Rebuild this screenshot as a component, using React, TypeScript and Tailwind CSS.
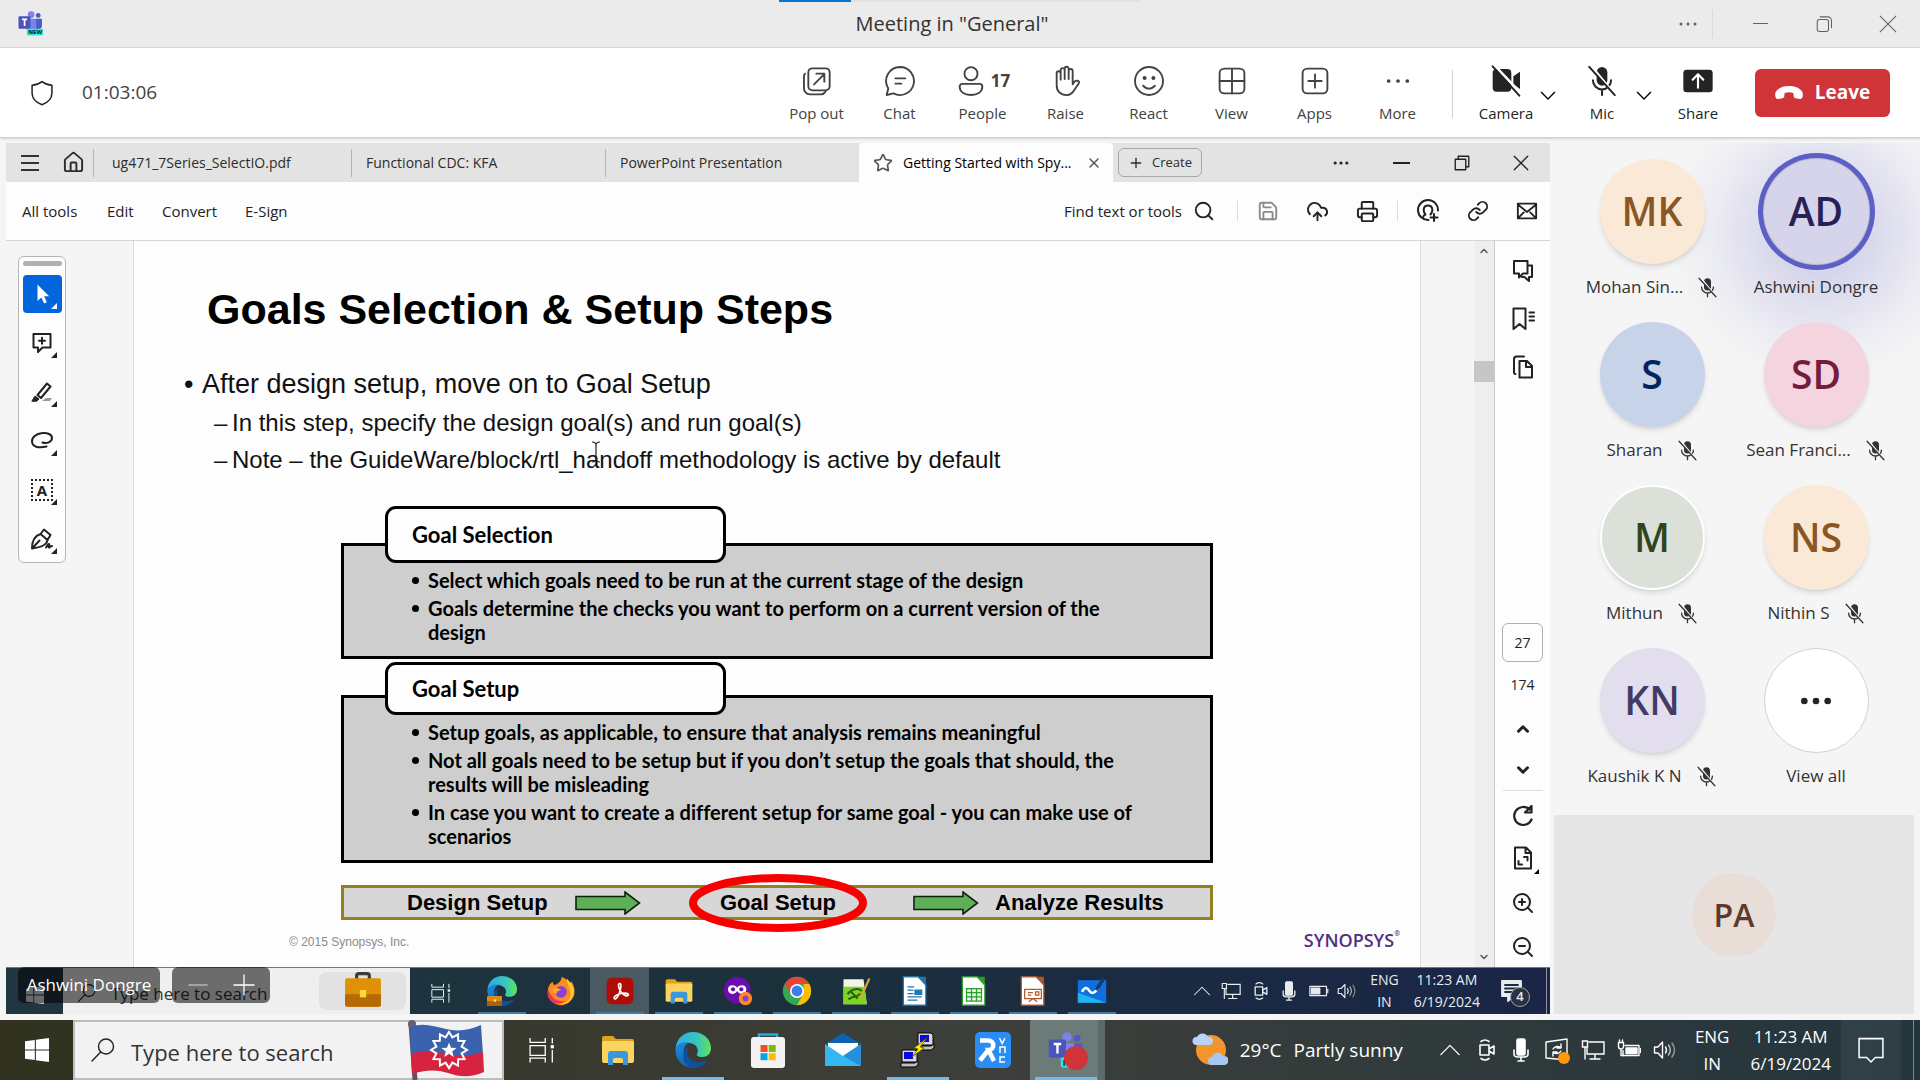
import React from "react";
import { LuHouse, LuStar, LuX, LuPlus, LuSearch, LuSave, LuCloudUpload, LuPrinter, LuLink, LuZoomIn, LuZoomOut, LuChevronUp, LuChevronDown } from "react-icons/lu";

type Kids = { children?: React.ReactNode; className?: string };

function Line({ children, className = "size-[32px]", w = 1.4 }: Kids & { w?: number }) {
  return (
    <svg viewBox="0 0 24 24" className={className} fill="none" stroke="currentColor" strokeWidth={w} strokeLinecap="round" strokeLinejoin="round" aria-hidden="true">
      {children}
    </svg>
  );
}

function Art({ children, className = "size-9" }: Kids) {
  return (
    <svg viewBox="0 0 36 36" className={className} aria-hidden="true">
      {children}
    </svg>
  );
}

function Dots({ className = "size-[32px]", r = 1.3 }: { className?: string; r?: number }) {
  return (
    <svg viewBox="0 0 24 24" className={className} fill="currentColor" aria-hidden="true">
      <circle cx="5" cy="12" r={r} />
      <circle cx="12" cy="12" r={r} />
      <circle cx="19" cy="12" r={r} />
    </svg>
  );
}

function MicOff({ className }: { className: string }) {
  return (
    <svg viewBox="0 0 24 24" className={className} fill="none" stroke="currentColor" strokeWidth="1.5" strokeLinecap="round" aria-hidden="true">
      <rect x="8" y="1.5" width="8" height="14" rx="4" fill="currentColor" stroke="none" />
      <path d="M5.2 11.5a6.8 6.8 0 0 0 13.6 0M12 18.5v4" />
      <path d="M3.6 .4l18 22" stroke="white" strokeWidth="2" />
      <path d="M2.4 1.4l19.2 21.2" />
    </svg>
  );
}

function TeamsLogo({ className }: { className: string }) {
  return (
    <svg viewBox="0 0 24 24" className={className} aria-hidden="true">
      <circle cx="12.6" cy="3.4" r="3.2" fill="#7b83eb" />
      <circle cx="19.4" cy="4.2" r="2.3" fill="#5059c9" />
      <path d="M17 7.5h6v7a4 4 0 0 1-6 3z" fill="#5059c9" />
      <path d="M8 7.5h9.5v8a5 5 0 0 1-9.5 2z" fill="#7b83eb" />
      <rect x="0.5" y="5" width="11.5" height="12" rx="1" fill="#4b53bc" />
      <path d="M3.8 8h5M6.3 8v6.3" stroke="white" strokeWidth="1.6" fill="none" />
      <rect x="8.5" y="17" width="15.5" height="6.6" rx="1.2" fill="#2fe6e0" />
      <text x="9.8" y="22.4" fontSize="5.6" fontWeight="800" fontFamily="Open Sans, sans-serif" fill="#083b3a">NEW</text>
    </svg>
  );
}

function ToolItem({ label, children }: { label: string; children: React.ReactNode }) {
  return (
    <button className="flex w-[83px] flex-col items-center gap-[6px] text-[#424242]">
      <span className="flex h-8 items-center gap-1">{children}</span>
      <span className="text-[15px] leading-5">{label}</span>
    </button>
  );
}

function SolidItem({ label, children }: { label: string; children: React.ReactNode }) {
  return (
    <button className="flex w-[60px] flex-col items-center gap-[6px] text-[#242424]">
      <span className="flex h-8 items-center">{children}</span>
      <span className="text-[15px] leading-5">{label}</span>
    </button>
  );
}

function TitleBar() {
  return (
    <header className="relative grid h-12 grid-cols-[1fr_auto_1fr] items-center border-b border-[#d6d6d6] bg-[#ebebeb]">
      <div className="absolute top-0 left-[779px] flex h-[2px] w-[361px] bg-[#e2e2e2]">
        <div className="w-[72px] bg-[#0078d4]" />
      </div>
      <TeamsLogo className="ml-[18px] size-[25px]" />
      <h1 className="pr-4 text-[20px] text-[#333]">Meeting in "General"</h1>
      <div className="flex items-center justify-end text-[#616161]">
        <button aria-label="More options" className="mr-3"><Dots className="size-6" r={1.5} /></button>
        <span className="mr-[15px] h-7 w-px bg-[#dcdcdc]" />
        <button aria-label="Minimize" className="flex w-16 justify-center"><span className="block h-px w-[15px] bg-[#616161]" /></button>
        <button aria-label="Restore" className="flex w-16 justify-center">
          <Line className="size-[18px]"><rect x="3" y="6" width="15" height="16" rx="3" /><path d="M7 2.5h10a5 5 0 0 1 5 5V17" /></Line>
        </button>
        <button aria-label="Close" className="flex w-16 justify-center">
          <Line className="size-[18px]"><path d="M1.5 1.5l21 21M22.500 1.500l-21 21" /></Line>
        </button>
      </div>
    </header>
  );
}

function MeetingBar() {
  return (
    <div className="flex h-[90px] items-center border-b border-[#d1d1d1] bg-white shadow-sm">
      <Line className="ml-7 size-7 text-[#242424]" w={1.3}><path d="M12 2.200c2.600 2 5.300 2.900 8.500 3.100V12c0 4.800-3 8-8.500 10-5.500-2-8.500-5.200-8.500-10V5.300c3.200-.2 5.900-1.100 8.500-3.100z" /></Line>
      <time className="ml-[26px] text-[19px] text-[#424242]">01:03:06</time>
      <div className="ml-auto flex items-center pr-[30px] pt-[2px]">
        <ToolItem label="Pop out">
          <Line><rect x="5.500" y="2.500" width="16" height="16.500" rx="3" /><path d="M3 6.500A4 4 0 0 0 2.200 9v8.500A4.500 4.500 0 0 0 6.700 22H15a4 4 0 0 0 3.300-2M9.800 14.600l7.600-7.800M11.500 6.500h6v6" /></Line>
        </ToolItem>
        <ToolItem label="Chat">
          <Line><path d="M12 1.500a10.500 10.500 0 1 1-4.900 19.800L2 22.500l1.200-4.900A10.500 10.500 0 0 1 12 1.500zM8.500 10h7.500M8.500 14h4.500" /></Line>
        </ToolItem>
        <ToolItem label="People">
          <Line><circle cx="12" cy="6.500" r="4.900" /><path d="M5.500 14.200h13a2 2 0 0 1 2 2c0 4-3.500 6.300-8.500 6.300s-8.500-2.300-8.500-6.300a2 2 0 0 1 2-2z" /></Line>
          <span className="text-[17px] font-bold">17</span>
        </ToolItem>
        <ToolItem label="Raise">
          <Line><path d="M5 13V6.200a1.500 1.500 0 0 1 3 0V11V3.800a1.500 1.500 0 0 1 3 0V10.500V2.800a1.500 1.500 0 0 1 3 0V10.500V4.500a1.500 1.500 0 0 1 3 0V14.500c.8-1.600 2-3 3.700-2.700 1.200.3 1.500 1.300.7 2.200l-2.800 4.200c-1.500 2.600-3 4.400-6.100 4.400-4.700 0-7.500-3-7.500-7.500z" /></Line>
        </ToolItem>
        <ToolItem label="React">
          <Line><circle cx="12" cy="12" r="10.500" /><path d="M7.600 15.500c2.400 3 6.400 3 8.800 0" /><circle cx="8.700" cy="9.800" r=".8" fill="currentColor" /><circle cx="15.300" cy="9.800" r=".8" fill="currentColor" /></Line>
        </ToolItem>
        <ToolItem label="View">
          <Line><rect x="2.700" y="2.700" width="18.600" height="18.600" rx="3.500" /><path d="M12 2.700v18.600M2.700 12h18.600" /></Line>
        </ToolItem>
        <ToolItem label="Apps">
          <Line><rect x="2.700" y="2.700" width="18.600" height="18.600" rx="3.500" /><path d="M12 7v10M7 12h10" /></Line>
        </ToolItem>
        <ToolItem label="More"><Dots r={1.4} /></ToolItem>
        <span className="mr-[23px] ml-[13px] h-12 w-px bg-[#d1d1d1]" />
        <SolidItem label="Camera">
          <Line className="size-8" w={1.5}>
            <path d="M2 6a3 3 0 0 1 3-3h8a3 3 0 0 1 3 3v11a3 3 0 0 1-3 3H5a3 3 0 0 1-3-3z M17.500 8.500l5-3.500v13l-5-3.500z" fill="currentColor" stroke="none" />
            <path d="M3.500.5l20 21" stroke="white" strokeWidth="2" /><path d="M2 1l20 22" />
          </Line>
        </SolidItem>
        <button aria-label="Camera options" className="flex w-6 justify-center pt-1"><Line className="size-4" w={2}><path d="M2 6.500l10 10 10-10" /></Line></button>
        <span className="w-3" />
        <SolidItem label="Mic"><MicOff className="size-8" /></SolidItem>
        <button aria-label="Mic options" className="flex w-6 justify-center pt-1"><Line className="size-4" w={2}><path d="M2 6.500l10 10 10-10" /></Line></button>
        <span className="w-3" />
        <SolidItem label="Share">
          <Line className="size-8" w={1.600}><rect x="1" y="3.500" width="22" height="17" rx="2.500" fill="currentColor" stroke="none" /><path d="M12 17V7.500M8 11l4-4 4 4" stroke="white" /></Line>
        </SolidItem>
        <button className="mb-[2px] ml-[27px] flex h-12 w-[135px] items-center justify-center gap-3 rounded-md bg-[#d13438] text-white">
          <svg viewBox="0 0 28 14" className="h-[14px] w-7" fill="currentColor" aria-hidden="true"><path d="M14 0c6 0 10 1.800 12.700 5 1.300 1.500 1.500 4 .6 6.500-.4 1-1.300 1.700-2.500 1.500l-4.300-.8c-1-.2-1.700-1-1.800-2L18.400 7C15.500 5.900 12.500 5.900 9.600 7l-.3 3.200c-.1 1-.8 1.800-1.800 2l-4.300.8c-1.200.2-2.100-.5-2.500-1.500C-.2 9 0 6.500 1.300 5 4 1.800 8 0 14 0z" /></svg>
          <span className="text-[19px] font-bold">Leave</span>
        </button>
      </div>
    </div>
  );
}

function PdfTabs() {
  return (
    <div className="flex h-[39px] items-center bg-[#e3e3e3] text-[14px] text-[#2c2c2c]">
      <button aria-label="Menu" className="ml-[15px] flex w-[18px] flex-col gap-[5px]">
        <span className="h-[2px] bg-[#333]" /><span className="h-[2px] bg-[#333]" /><span className="h-[2px] bg-[#333]" />
      </button>
      <button aria-label="Home" className="mr-[8px] ml-[23px]"><LuHouse className="size-[23px]" /></button>
      <button className="h-7 w-[258px] border-l border-[#b4b4b4] pl-[18px] text-left">ug471_7Series_SelectIO.pdf</button>
      <button className="h-7 w-[254px] border-l border-[#b4b4b4] pl-[14px] text-left">Functional CDC: KFA</button>
      <button className="h-7 w-[254px] border-l border-[#b4b4b4] pl-[14px] text-left">PowerPoint Presentation</button>
      <div className="flex h-full w-[254px] items-center rounded-t bg-[#fdfdfd] pl-[14px] text-black">
        <LuStar className="size-[20px] text-[#555]" />
        <button className="ml-[10px] w-[172px] truncate text-left">Getting Started with Spy...</button>
        <button aria-label="Close tab" className="ml-[11px]"><LuX className="size-4 text-[#555]" /></button>
      </div>
      <button className="ml-[5px] flex h-[29px] w-[84px] items-center justify-center gap-2 rounded-md border border-[#a8a8a8] text-[13px]">
        <LuPlus className="size-[16px]" />Create
      </button>
      <div className="ml-auto flex items-center text-[#222]">
        <button aria-label="More" className="flex w-[61px] justify-center"><Dots className="size-5" r={1.900} /></button>
        <button aria-label="Minimize window" className="flex w-[61px] justify-center"><span className="h-[2px] w-[17px] bg-[#222]" /></button>
        <button aria-label="Restore window" className="flex w-[59px] justify-center"><Line className="size-[18px]" w={1.800}><path d="M3 7h14v14H3zM7 7V3h14v14h-4" /></Line></button>
        <button aria-label="Close window" className="flex w-[59px] justify-center"><Line className="size-[18px]" w={1.800}><path d="M3 3l18 18M21 3L3 21" /></Line></button>
      </div>
    </div>
  );
}

function PdfToolbar() {
  return (
    <div className="flex h-[59px] items-center border-b border-[#d5d5d5] bg-[#fdfdfd] pl-4 text-[15px] text-[#222]">
      <button className="w-[85px] text-left">All tools</button>
      <button className="w-[55px] text-left">Edit</button>
      <button className="w-[83px] text-left">Convert</button>
      <button>E-Sign</button>
      <button className="ml-auto flex items-center gap-[11px]">Find text or tools <LuSearch className="size-[22px]" /></button>
      <span className="mx-[22px] h-5 w-px bg-[#ddd]" />
      <button aria-label="Save" className="mr-[27px] ml-[-3px] text-[#8a8a8a]"><LuSave className="size-[22px]" /></button>
      <button aria-label="Upload" className="mr-[27px]"><LuCloudUpload className="size-[23px]" /></button>
      <button aria-label="Print"><LuPrinter className="size-[23px]" /></button>
      <span className="mx-[18px] h-5 w-px bg-[#ddd]" />
      <button aria-label="Request signatures" className="mr-[27px]">
        <Line className="size-6" w={2}><path d="M12.500 21A10 10 0 1 1 22 11.500M7 18.500c.3-2 1-2.500 2.500-3-2.500-2.500-3-9 2.500-9s5 6.500 2.500 9M18 15v7M14.500 18.500h7" /></Line>
      </button>
      <button aria-label="Copy link" className="mr-[27px]"><LuLink className="size-[22px]" /></button>
      <button aria-label="Email" className="mr-3">
        <Line className="size-[22px]" w={2}><path d="M2 4h20v16H2zM2 5l10 8 10-8M2.500 19.500l6-6M21.500 19.500l-6-6" /></Line>
      </button>
    </div>
  );
}

function PaletteButton({ label, active, children }: { label: string; active?: boolean; children: React.ReactNode }) {
  return (
    <button aria-label={label} className={active ? "relative flex h-[38px] w-[39px] items-center justify-center rounded bg-[#0265dc] text-white" : "relative flex h-[38px] w-[39px] items-center justify-center text-[#222]"}>
      {children}
      <svg viewBox="0 0 6 6" className="absolute right-[5px] bottom-[4px] size-[6px]" fill="currentColor" aria-hidden="true"><path d="M6 0v6H0z" /></svg>
    </button>
  );
}

function Palette() {
  return (
    <aside className="w-[128px] shrink-0 border-r border-[#dadada] bg-[#f5f5f5] pt-[15px] pl-3">
      <div className="flex w-12 flex-col items-center gap-[11px] rounded-md border border-[#b5b5b5] bg-[#fdfdfd] pt-1 pb-1">
        <span className="mb-[-2px] h-[5px] w-[39px] rounded-full bg-[#b0b0b0]" />
        <PaletteButton label="Select" active>
          <Line className="size-6" w={0}><path d="M7.500 2.500v16.500l3.800-3.600 2.800 6 2.800-1.200-2.800-6h5z" fill="white" /></Line>
        </PaletteButton>
        <PaletteButton label="Add comment"><Line className="size-6" w={2}><path d="M3.500 3h17v13.500h-8L8 21v-4.500H3.500zM12 6.800v6M9 9.800h6" /></Line></PaletteButton>
        <PaletteButton label="Highlight"><Line className="size-6" w={2}><path d="M7.500 15L17 3.500l3.500 3L11 18z" /><path d="M2 21l3-5 4 3-2 2z" fill="currentColor" strokeWidth="1" /><path d="M12 21h8l2-3h-6z" fill="#9a9a9a" stroke="none" /></Line></PaletteButton>
        <PaletteButton label="Draw"><Line className="size-6" w={2}><path d="M12.500 13.500c4 1.500 9.500-.5 9.500-4.500 0-3.500-4.500-5.500-9.500-5C6 4.600 1.500 8.500 2 13c.5 4.500 6 6.500 14.500 4.500" /></Line></PaletteButton>
        <PaletteButton label="Text box"><span className="flex size-[22px] items-center justify-center border-2 border-dotted border-[#222] text-[15px] leading-none font-bold">A</span></PaletteButton>
        <PaletteButton label="Sign"><Line className="size-6" w={2}><path d="M2 21.500c0-6 2-12.500 8.500-14.500l7 6c-.5 4.500-7 7.500-15.500 8.500zM2.500 21l7-7.500M10.500 7L14 2.500l6.500 5.500-3 5M16 20.500c1.500-2 2-4 3-3.500s-1 3.500 0 3.500 1-1.500 3-1.500" /></Line></PaletteButton>
      </div>
    </aside>
  );
}

function Bullet({ children }: { children: React.ReactNode }) {
  return (
    <li className="flex">
      <span className="flex h-6 w-4 shrink-0 items-center"><span className="size-[7px] rounded-full bg-black" /></span>
      <span>{children}</span>
    </li>
  );
}

function GoalBox({ title, compact, children }: { title: string; compact?: boolean; children: React.ReactNode }) {
  return (
    <section className="w-[872px] font-[Lato,sans-serif] font-bold text-black [font-variant-ligatures:none]">
      <h3 className={`relative z-10 ml-[44px] flex w-[341px] items-center rounded-[11px] border-[3px] border-black bg-[#fefefe] pl-6 text-[22px] ${compact ? "h-[53px]" : "h-[57px]"}`}>{title}</h3>
      <ul className="mt-[-20px] flex flex-col gap-1 border-[3px] border-black bg-[#cecece] pt-[22px] pr-[40px] pb-3 pl-[68px] text-[20px] leading-6">{children}</ul>
    </section>
  );
}

function Arrow() {
  return (
    <svg viewBox="0 0 66 24" className="h-6 w-[66px]" aria-hidden="true"><path d="M1 5.500h49V1l14.500 11L50 23v-4.500H1z" fill="#5faf58" stroke="#0d240c" strokeWidth="1.600" /></svg>
  );
}

function Slide() {
  return (
    <article className="flex min-w-0 flex-1 flex-col bg-[#fdfdfd] font-['Liberation_Sans',Arial,sans-serif] text-[#111]">
      <h2 className="mt-[43px] ml-[73px] text-[43px] leading-[50px] font-bold text-black">Goals Selection &amp; Setup Steps</h2>
      <p className="mt-[34px] flex pl-[50px] text-[27px] leading-8"><span className="w-[18px]">•</span>After design setup, move on to Goal Setup</p>
      <p className="mt-1 flex pl-[80px] text-[24px] leading-[37px]"><span className="w-[18px]">–</span>In this step, specify the design goal(s) and run goal(s)</p>
      <p className="relative flex pl-[80px] text-[24px] leading-[37px]">
        <span className="w-[18px]">–</span>Note – the GuideWare/block/rtl_handoff methodology is active by default
        <svg viewBox="0 0 10 22" className="absolute top-0 left-[457px] h-[22px] w-[10px]" stroke="#222" strokeWidth="1.200" fill="none" aria-hidden="true"><path d="M1 1q4 0 4 3v14q0 3-4 3M9 1Q5 1 5 4v14q0 3 4 3" /></svg>
      </p>
      <div className="mt-7 ml-[207px] flex flex-col gap-[3px]">
        <GoalBox title="Goal Selection">
          <Bullet>Select which goals need to be run at the current stage of the design</Bullet>
          <Bullet>Goals determine the checks you want to perform on a current version of the<br />design</Bullet>
        </GoalBox>
        <GoalBox title="Goal Setup" compact>
          <Bullet>Setup goals, as applicable, to ensure that analysis remains meaningful</Bullet>
          <Bullet>Not all goals need to be setup but if you don’t setup the goals that should, the<br />results will be misleading</Bullet>
          <Bullet>In case you want to create a different setup for same goal - you can make use of<br />scenarios</Bullet>
        </GoalBox>
      </div>
      <div className="mt-[22px] ml-[207px] flex h-[35px] w-[872px] items-center border-[3px] border-[#93801f] bg-[#d7d7d7] pl-[63px] text-[22px] font-bold text-black">
        <span className="w-[168px]">Design Setup</span>
        <Arrow />
        <span className="relative ml-12 flex h-7 w-[178px] items-center justify-center">
          Goal Setup
          <svg viewBox="0 0 178 58" className="absolute top-[-15px] left-0 h-[58px] w-[178px]" fill="none" stroke="#f80000" strokeWidth="8" aria-hidden="true"><ellipse cx="89" cy="29" rx="85" ry="25" /></svg>
        </span>
        <span className="ml-[46px] flex"><Arrow /></span>
        <span className="ml-[16px]">Analyze Results</span>
      </div>
      <div className="mt-auto mb-[9px] flex items-center justify-between pr-[20px] pl-[155px]">
        <span className="text-[12px] text-[#8a8a8a]">© 2015 Synopsys, Inc.</span>
        <span className="flex items-start pb-1 font-['Open_Sans',sans-serif] text-[18px] leading-7 font-semibold text-[#50307f]">SYNOPSYS<span className="text-[7px] leading-4">®</span></span>
      </div>
    </article>
  );
}

function RightRail() {
  return (
    <aside className="flex w-[56px] shrink-0 flex-col items-center border-l border-[#c9c9c9] bg-[#fdfdfd] text-[#222]">
      <button aria-label="Comments" className="mt-[18px]"><Line className="size-6" w={2}><path d="M3 2h13.500v12.500H12L8 18.500v-4H3zM16.500 6.500H21V18h-3v4l-4.500-4H11" /></Line></button>
      <button aria-label="Bookmarks" className="mt-6"><Line className="size-6" w={2}><path d="M2.500 1.500h12V22l-6-5-6 5zM18.500 5.500H23M18.500 9.500H23M18.500 13.500H23" /></Line></button>
      <button aria-label="Pages" className="mt-6"><Line className="size-6" w={2}><path d="M8.500 6h7.500l5 5v11.500H8.500zM15 6v6h6M4.500 19C3 19 3 18.500 3 17V4c0-2 .5-2.500 2.500-2.500H13" /></Line></button>
      <input aria-label="Page" defaultValue="27" className="mt-auto block h-[39px] w-[41px] rounded-md border border-[#b0b0b0] bg-transparent text-center text-[14px]" />
      <span className="mt-[13px] text-[14px] leading-5">174</span>
      <button aria-label="Previous page" className="mt-[25px]"><LuChevronUp className="size-[18px]" strokeWidth={4} /></button>
      <button aria-label="Next page" className="mt-[23px]"><LuChevronDown className="size-[18px]" strokeWidth={4} /></button>
      <span className="mt-[11px] h-px w-[40px] bg-[#ddd]" />
      <button aria-label="Rotate" className="mt-[13px]"><Line className="size-6" w={2.200}><path d="M20.500 15.500A9 9 0 1 1 18.500 5.500M20.500 2v6.500H14z" /></Line></button>
      <button aria-label="Fit page" className="relative mt-[18px]">
        <Line className="size-6" w={2}><path d="M4 1.500h11l5 5v16H4zM14.500 1.500V7H20M13 11h3.500v3.500M11 18.500H7.500V15" /></Line>
        <svg viewBox="0 0 6 6" className="absolute right-[-4px] bottom-[-4px] size-[5px]" aria-hidden="true"><path d="M6 0v6H0z" /></svg>
      </button>
      <button aria-label="Zoom in" className="mt-[21px]"><LuZoomIn className="size-6" /></button>
      <button aria-label="Zoom out" className="mt-[20px] mb-[8px]"><LuZoomOut className="size-6" /></button>
    </aside>
  );
}

function Windows({ className }: { className: string }) {
  return (
    <svg viewBox="0 0 24 24" className={className} fill="currentColor" aria-hidden="true"><path d="M0 3.300l9.800-1.400v9.500H0zM10.900 1.700L24 0v11.400H10.900zM0 12.500h9.800V22L0 20.700zM10.900 12.500H24V24l-13.100-1.800z" /></svg>
  );
}

function TaskView({ className }: { className: string }) {
  return (
    <Line className={className} w={1.200}><path d="M1 1v4h14V1M1 8h14v9H1zM1 23.500v-4h14v4M21.500 1v5M21.500 12v11.500" strokeLinecap="butt" strokeLinejoin="miter" /><path d="M20 7.500h3v3h-3z" fill="currentColor" stroke="none" /></Line>
  );
}

const EdgeArt = () => (
  <>
    <defs>
      <linearGradient id="edgeTop" x1="0" x2="1"><stop offset="0" stopColor="#35a8e8" /><stop offset=".6" stopColor="#36c6c0" /><stop offset="1" stopColor="#5fe35a" /></linearGradient>
      <linearGradient id="edgeLow" x1="0" x2="1" y2="1"><stop offset="0" stopColor="#1d8fe0" /><stop offset="1" stopColor="#0c4a96" /></linearGradient>
    </defs>
    <path d="M.5 16C2 6 9 0 18 0c10 0 18 7 18 16 0 6-4 9-9 9-4 0-6-1.500-5-3 2-2.500 1-10-7-11C9 10.500 3 13 .5 16z" fill="url(#edgeTop)" />
    <path d="M.5 16C3 11 9 9.500 14 10.500c-4 2-6 6-5 11C10.500 29 17 33 24 32c3-.5 6-2 8.500-4C29 33 24 36 18 36 8 36-.5 27 .5 16z" fill="url(#edgeLow)" />
    <path d="M14 14.500c-3 3-2.500 9 1 12.500 4.500 4.300 12 4 17.500 1C29 34 23 36 18 36 11 34.500 7 28 8.500 21.500c.5-3 2.500-6 5.500-7z" fill="#114f9f" />
  </>
);

const FolderArt = () => (
  <>
    <path d="M2 6a2 2 0 0 1 2-2h9l3 3h16a2 2 0 0 1 2 2v4H2z" fill="#e0a21b" />
    <rect x="2" y="9" width="32" height="22" rx="2" fill="#fbd45f" />
    <path d="M8 33V22a3 3 0 0 1 3-3h14a3 3 0 0 1 3 3v11h-5v-5a2 2 0 0 0-2-2h-6a2 2 0 0 0-2 2v5z" fill="#3a97dd" />
  </>
);

const BriefcaseArt = () => (
  <>
    <path d="M12 7V3.500a2 2 0 0 1 2-2h8a2 2 0 0 1 2 2V7" fill="none" stroke="#3a3a3a" strokeWidth="3" />
    <rect x="1" y="6" width="34" height="27" rx="2" fill="#e19105" />
    <path d="M1 21h34v10a2 2 0 0 1-2 2H3a2 2 0 0 1-2-2z" fill="#b56a06" />
    <rect x="15" y="17" width="6" height="7" fill="#ffd83b" />
  </>
);

const FirefoxArt = () => (
  <>
    <path d="M19 1c5 2 8 5 9 8 2-1 2-3 2-3 4 5 5 11 4 16-2 8-9 13-16 13S2 29 2 20C2 13 5 9 8 7c0 2 1 3 2 4 3-1 8-3 9-10z" fill="#ff8a1f" />
    <path d="M25 3c5 5 10 12 8 19-2 8-9 13-16 12 10-2 14-9 12-16-1-6-4-9-4-15z" fill="#ffcb2f" />
    <path d="M3 16c3 11 11 16 20 14-7 6-19 3-21-7z" fill="#f0325c" />
    <circle cx="18" cy="19" r="7" fill="#8a3fd6" />
    <path d="M8 16c4-3 8-1 10 1-3 0-5 1-5 4-3 0-5-2-5-5z" fill="#ffae2b" />
  </>
);

function DocArt({ color, kind }: { color: string; kind: "text" | "grid" | "slide" }) {
  return (
    <>
      <path d="M4 1h18l9 9v25H4z" fill="white" stroke={color} strokeWidth="1.500" />
      <path d="M21 1h10v11z" fill={color} />
      {kind === "text" && <path d="M9 13h8M9 17h7M9 21h7M9 25h17M9 29h12M18 17h8v5h-8z" stroke={color} strokeWidth="1.500" fill={color} />}
      {kind === "grid" && <path d="M9 15h18v15H9zM9 20h18M9 25h18M15 15v15M21 15v15" stroke={color} strokeWidth="1.500" fill="#e6f5e6" />}
      {kind === "slide" && <path d="M8 16h20v11H8zM12 20h6M12 23h4M21 19h4v4h-4zM13 31l5-4 5 4" stroke={color} strokeWidth="1.500" fill="none" />}
    </>
  );
}

function SharedApp({ label, active, plain, children }: { label: string; active?: boolean; plain?: boolean; children: React.ReactNode }) {
  return (
    <button aria-label={label} className={active ? "flex h-full w-[59px] flex-col items-center justify-end bg-[#4a5a62]" : "flex h-full w-[59px] flex-col items-center justify-end"}>
      <Art className="mb-[6px] size-[30px]">{children}</Art>
      <span className={plain ? "h-[2px] w-[48px]" : "h-[2px] w-[48px] bg-[#3f7ba8]"} />
    </button>
  );
}

function CamTray({ className }: { className: string }) {
  return <Line className={className} w={1.600}><path d="M5 7h9v10H5zM14 11l5-3v8l-5-3M6 3.500Q10 .5 14 3.500M6 20.500q4 3 8 0" /></Line>;
}
function MicTray({ className }: { className: string }) {
  return <Line className={className} w={1.600}><rect x="8" y="1" width="8" height="16" rx="1.500" fill="currentColor" /><path d="M5 12v4q0 3 4 3h6q4 0 4-3v-4M12 19v4M9 23h6" /></Line>;
}
function NetTray({ className }: { className: string }) {
  return <Line className={className} w={1.400}><path d="M8 4h15v12H6V9M14 16v5M9 21h10M1.500 3h5v6h-5zM4 9v12" strokeLinejoin="miter" /></Line>;
}
function VolTray({ className }: { className: string }) {
  return <Line className={className} w={1.400}><path d="M1.500 9v6h3.500l4.500 5V4L5 9zM12.500 9q2 3 0 6" /><path d="M15.500 7q3.500 5 0 10" opacity=".7" /><path d="M19 5q5 7 0 14" opacity=".5" /></Line>;
}

function SharedTaskbar() {
  return (
    <div className="relative flex h-[47px] items-center border-t border-[#70797d] bg-linear-to-r from-[#203740] via-[#1c303c] to-[#1a2547] text-[#e8ecee]">
      <button aria-label="Start" className="flex h-full w-[57px] items-center justify-center pt-2"><Windows className="size-[18px]" /></button>
      <div className="flex h-full w-[347px] items-center bg-[#efefef] pr-1 pl-[14px] text-[#222]">
        <Line className="mt-1 size-5"><circle cx="14.500" cy="9" r="7" /><path d="M9.500 14L2 22" /></Line>
        <input aria-label="Search the shared desktop" placeholder="Type here to search" className="ml-[14px] h-8 min-w-0 flex-1 pt-1 text-[17px] placeholder:text-[#333]" />
        <span className="flex h-[38px] w-[87px] items-center justify-center rounded-lg bg-[#e2e2e2]"><Art className="size-[38px]"><BriefcaseArt /></Art></span>
      </div>
      <button aria-label="Task view" className="flex w-[62px] justify-center pt-1"><TaskView className="size-5" /></button>
      <SharedApp label="Edge"><EdgeArt /><rect x="0" y="24" width="18" height="12" rx="1" fill="#d98a1c" /><rect x="0" y="30" width="18" height="6" fill="#a8600c" /><rect x="8" y="28" width="3" height="3" fill="#ffd83b" /></SharedApp>
      <SharedApp label="Firefox" plain><FirefoxArt /></SharedApp>
      <SharedApp label="Acrobat" active>
        <rect x="2" y="2" width="32" height="32" rx="6" fill="#ad0d05" />
        <path d="M18 9c-3 0-2 5 1 10 3 4 8 6 9 4s-4-3-9-2c-5 1-9 4-8 6s4-1 6-6 3-12 1-12z" fill="none" stroke="white" strokeWidth="2" />
      </SharedApp>
      <SharedApp label="File Explorer"><FolderArt /></SharedApp>
      <SharedApp label="Private browsing">
        <circle cx="17" cy="17" r="16" fill="#6a0dad" />
        <path d="M6 16c0-6 8-6 11-2 3-4 11-4 11 2 0 7-8 7-11 2-3 5-11 5-11-2z" fill="white" /><circle cx="12" cy="16" r="2.500" fill="#6a0dad" /><circle cx="22" cy="16" r="2.500" fill="#6a0dad" />
        <circle cx="27" cy="27" r="8" fill="#ff8a1f" /><circle cx="27" cy="27" r="3.500" fill="#8a3fd6" />
      </SharedApp>
      <SharedApp label="Chrome">
        <circle cx="18" cy="18" r="17" fill="#34a853" /><path d="M3.300 9.500a17 17 0 0 1 29.400 0H18l-7 13z" fill="#ea4335" /><path d="M32.700 9.500A17 17 0 0 1 18 35l7.400-13 .6-12.500z" fill="#fbbc05" />
        <circle cx="18" cy="18" r="8.500" fill="white" /><circle cx="18" cy="18" r="6.500" fill="#3b7ded" />
      </SharedApp>
      <SharedApp label="Notepad++">
        <path d="M3 4h24l4 30H3z" fill="#f1f5e8" /><path d="M3 13h25l3 21H3z" fill="#7fd321" />
        <path d="M8 22c4-7 14-8 17-4M9 28c6-5 10-1 14-7M11 18l9 9" stroke="#295e13" strokeWidth="2.500" fill="none" /><path d="M34 3L24 26" stroke="#d8a63a" strokeWidth="2.500" />
      </SharedApp>
      <SharedApp label="Writer"><DocArt color="#1b78b5" kind="text" /></SharedApp>
      <SharedApp label="Calc"><DocArt color="#2a9d2a" kind="grid" /></SharedApp>
      <SharedApp label="Impress"><DocArt color="#b5562a" kind="slide" /></SharedApp>
      <SharedApp label="Whiteboard">
        <rect x="1" y="5" width="34" height="27" fill="#0d6fe0" /><path d="M1 32V20l34 12z" fill="#25b5ee" />
        <path d="M6 19c4-8 7-4 9-1s5 4 10-3" stroke="white" strokeWidth="3" fill="none" /><path d="M32 3l-9 14" stroke="#173a6b" strokeWidth="4" />
      </SharedApp>
      <div className="ml-auto flex items-center">
        <Line className="mr-[10px] size-[18px]"><path d="M2 17L12 7l10 10" /></Line>
        <NetTray className="mr-[10px] size-5" />
        <CamTray className="mr-[8px] size-5" />
        <MicTray className="mr-[10px] size-5" />
        <Line className="mr-[8px] size-5"><rect x="1" y="6.500" width="20" height="11" /><path d="M22.500 10v4" /><path d="M3 8.500h10v7H3z" fill="currentColor" /></Line>
        <VolTray className="size-5" />
        <div className="ml-[13px] text-center text-[14px] leading-[22px]">ENG<br />IN</div>
        <time className="ml-[15px] text-center text-[14px] leading-[22px]">11:23 AM<br />6/19/2024</time>
        <span className="relative mr-[14px] ml-[20px] block w-8">
          <Line className="size-6" w={1.800}><path d="M2 2h19v15h-8l-5 5v-5H2z" fill="currentColor" /><path d="M5 6h13M5 9.500h13M5 13h8" stroke="#1c2a40" /></Line>
          <span className="absolute top-[8px] left-[10px] flex size-5 items-center justify-center rounded-full border border-[#9aa3ad] bg-[#2b3140] text-[13px] font-semibold">4</span>
        </span>
        <span className="mr-[3px] h-[46px] w-px bg-[#8b93a5]" />
      </div>
      <div className="absolute top-[-1px] left-3 flex gap-3 text-white">
        <span className="flex h-9 w-[142px] items-center justify-center rounded-md bg-black/55 text-[17px]">Ashwini Dongre</span>
        <div className="flex h-9 w-[98px] items-center justify-center gap-6 rounded-md bg-black/55">
          <button aria-label="Zoom out of the shared screen" className="text-[#b5b5b5]"><Line className="size-[22px]"><path d="M2 12h20" /></Line></button>
          <button aria-label="Zoom in to the shared screen"><Line className="size-[22px]"><path d="M1 12h22M12 1v22" /></Line></button>
        </div>
      </div>
    </div>
  );
}

function SharedScreen() {
  return (
    <section className="flex min-w-0 flex-1 flex-col">
      <PdfTabs />
      <PdfToolbar />
      <div className="flex flex-1">
        <Palette />
        <Slide />
        <div className="flex w-[74px] shrink-0 justify-end border-l border-[#dedede] bg-[#f5f5f5]">
          <div className="flex w-5 flex-col items-center bg-[#eee] pt-1 pb-1 text-[#555]">
            <LuChevronUp className="size-3" strokeWidth={3} />
            <span className="mt-[104px] h-[21px] w-5 bg-[#c6c6c6]" />
            <LuChevronDown className="mt-auto size-3" strokeWidth={3} />
          </div>
        </div>
        <RightRail />
      </div>
      <SharedTaskbar />
    </section>
  );
}

const people = [
  { initials: "MK", name: "Mohan Sin...", muted: true, look: "bg-[#fbe9d7] text-[#8a5621] shadow-md" },
  { initials: "AD", name: "Ashwini Dongre", muted: false, look: "bg-[#d6d4ea] text-[#282155] ring-[5px] ring-[#5b5fc7] ring-offset-1 ring-offset-[#bdbccb]" },
  { initials: "S", name: "Sharan", muted: true, look: "bg-[#c7d3e8] text-[#00245b] shadow-md" },
  { initials: "SD", name: "Sean Franci...", muted: true, look: "bg-[#f4d4de] text-[#751c3d] shadow-md" },
  { initials: "M", name: "Mithun", muted: true, look: "border-2 border-white bg-[#dbe1d8] text-[#31451f] shadow-md" },
  { initials: "NS", name: "Nithin S", muted: true, look: "bg-[#fbe9d7] text-[#8a5621] shadow-md" },
  { initials: "KN", name: "Kaushik K N", muted: true, look: "bg-[#e2deee] text-[#433a66] shadow-md" },
];

function Participants() {
  return (
    <aside className="relative flex w-[370px] shrink-0 flex-col overflow-hidden">
      <div className="absolute top-[-60px] right-[-50px] size-[300px] bg-radial from-[#c9c8e6] via-[#ebebf3] to-transparent to-70%" />
      <ul className="relative grid grid-cols-2 pt-4 pr-[22px] pl-5 text-[#333]">
        {people.map((p) => (
          <li key={p.initials} className="flex h-[163px] flex-col items-center">
            <span className={`flex size-[105px] items-center justify-center rounded-full text-[39px] font-semibold ${p.look}`}>{p.initials}</span>
            <span className="mt-[11px] flex items-center gap-[14px] text-[17px] leading-6 whitespace-nowrap">
              {p.name}
              {p.muted && <MicOff className="size-[21px]" />}
            </span>
          </li>
        ))}
        <li className="flex h-[163px] flex-col items-center">
          <button className="flex flex-col items-center">
            <span className="flex size-[105px] items-center justify-center rounded-full border border-[#d1d1d1] bg-white text-[#242424]"><Dots r={2} className="size-10" /></span>
            <span className="mt-[11px] text-[17px] leading-6">View all</span>
          </button>
        </li>
      </ul>
      <div className="mt-auto mr-[6px] ml-1 flex h-[199px] items-center justify-center bg-[#e6e6e6]">
        <span className="flex size-[84px] items-center justify-center rounded-full bg-[#e9ddd8] text-[32px] font-semibold text-[#5c3b2c]">PA</span>
      </div>
    </aside>
  );
}

function App3({ label, state, children }: { label: string; state?: "open" | "active"; children: React.ReactNode }) {
  return (
    <button aria-label={label} className={state === "active" ? "flex h-full w-[75px] flex-col items-center justify-end border-r-[7px] border-[#5b6b67] bg-[#6d7b78] pl-[3px]" : "flex h-full w-[75px] flex-col items-center justify-end"}>
      <span className="mb-[9px]">{children}</span>
      <span className={state ? "h-[3px] w-[62px] bg-[#76b9ed]" : "h-[3px] w-[62px]"} />
    </button>
  );
}

const BURST = Array.from({ length: 24 }, (_, i) => {
  const r = i % 2 ? 13 : 18;
  const a = (i * Math.PI) / 12;
  return `${(41 + r * Math.sin(a)).toFixed(1)},${(30 - r * Math.cos(a)).toFixed(1)}`;
}).join(" ");

function Flag() {
  return (
    <svg viewBox="0 0 78 60" className="h-[60px] w-[78px]" aria-hidden="true">
      <path d="M3 4l4 56" stroke="#5f5260" strokeWidth="5" /><circle cx="4" cy="4" r="4" fill="#6a5d6b" />
      <path d="M2 7c12-5 24-1 36 2s24 1 35-4l2 30c-14 6-24 5-36 2S14 32 3 35z" fill="#3a62ae" />
      <path d="M3 34c12-5 24-3 36 0s24 2 36-2l1 20c-14 6-24 5-36 1S16 50 4 54z" fill="#d8233f" />
      <polygon points={BURST} fill="none" stroke="white" strokeWidth="2" />
      <path d="M41 22.500l2 5.300 5.500.2-4.300 3.500 1.500 5.500-4.700-3.200-4.700 3.200 1.500-5.500-4.300-3.500 5.500-.2z" fill="white" />
    </svg>
  );
}

function Computer() {
  return <><path d="M2 1h13l2 2v10H2z" fill="#d8d8d8" stroke="black" /><rect x="4" y="3" width="9" height="7" fill="#0a0ae0" /><path d="M1 14h14l3-2v4l-3 2H1z" fill="#c0c0c0" stroke="black" /></>;
}

function Taskbar() {
  return (
    <footer className="flex h-[60px] items-center bg-linear-to-r from-[#30321f] via-[#3d3f3a] via-50% to-[#24353d] text-white">
      <button aria-label="Start" className="flex h-full w-[73px] items-center justify-center"><Windows className="size-6" /></button>
      <div className="flex h-[60px] w-[431px] items-center border-2 border-[#bdbdbd] bg-[#f2f2f2] pr-[16px] pl-4 text-[#222]">
        <Line className="size-6"><circle cx="15" cy="8.500" r="7.500" /><path d="M9.700 14L1 23" /></Line>
        <input aria-label="Search" placeholder="Type here to search" className="ml-4 h-10 min-w-0 flex-1 pt-1 text-[22px] placeholder:text-[#333]" />
        <Flag />
      </div>
      <button aria-label="Task view" className="flex w-[76px] justify-center"><TaskView className="size-[26px]" /></button>
      <App3 label="File Explorer"><Art><FolderArt /></Art></App3>
      <App3 label="Edge" state="open"><Art><EdgeArt /></Art></App3>
      <App3 label="Microsoft Store">
        <Art><path d="M9 6V2.500h18V6" fill="none" stroke="#29abe8" strokeWidth="2.500" /><rect x="1" y="5" width="34" height="31" rx="3" fill="#f3f3f3" /><path d="M10.500 13h7v7h-7z" fill="#f25022" /><path d="M18.700 13h7v7h-7z" fill="#7fba00" /><path d="M10.500 21.200h7v7h-7z" fill="#00a4ef" /><path d="M18.700 21.200h7v7h-7z" fill="#ffb900" /></Art>
      </App3>
      <App3 label="Mail">
        <Art><path d="M0 12L18 1l18 11z" fill="#0d63b0" /><path d="M3 11h30v14H3z" fill="white" /><path d="M0 12l18 12L36 12v22H0z" fill="#35b8f1" /><path d="M36 12v22L18 24z" fill="#2590dd" /></Art>
      </App3>
      <App3 label="PuTTY" state="open">
        <Art><g transform="translate(16 0)"><Computer /></g><g transform="translate(0 17)"><Computer /></g><path d="M27 6L14 16l4 1-6 8 12-9-4-1z" fill="#fff200" stroke="#5c5600" strokeWidth=".8" /></Art>
      </App3>
      <App3 label="RealVNC">
        <Art><rect width="36" height="36" rx="5" fill="#2a8cf5" /><path d="M5 8.500h8.500a4.500 4.500 0 0 1 0 9.500l5.500 11M5 28.500l8-10" stroke="white" strokeWidth="4.500" fill="none" /><path d="M24.500 6l2.700 5.500L30 6M25 21v-6h5v6M30 25h-5v5h5" stroke="white" strokeWidth="1.500" fill="none" /></Art>
      </App3>
      <App3 label="Teams" state="active">
        <span className="relative block"><TeamsLogo className="size-9" /><span className="absolute top-[14px] left-4 size-6 rounded-full bg-[#d13438]" /></span>
      </App3>
      <div className="ml-auto flex h-full items-center">
        <Art className="size-9"><ellipse cx="19" cy="18" rx="15" ry="15" fill="#f2952b" /><path d="M4 13a4 4 0 0 1 1-8 6 6 0 0 1 11 0 4 4 0 0 1 2 8z" fill="#b9d3f7" /><path d="M20 33a4 4 0 0 1 0-8 6 6 0 0 1 11-1 4.500 4.500 0 0 1 2 9z" fill="#a9c6f3" /></Art>
        <span className="ml-3 flex gap-3 text-[19px] whitespace-nowrap"><span>29°C</span><span>Partly sunny</span></span>
        <Line className="ml-9 size-[22px]"><path d="M2 17L12 7l10 10" /></Line>
        <CamTray className="ml-[14px] size-6" />
        <MicTray className="ml-[10px] size-6" />
        <span className="relative ml-3"><Line className="size-6"><path d="M1 4l21-3v21L1 20z" /><path d="M8 11a5 5 0 0 1 8-1M16 6v4h-4M16 13a5 5 0 0 1-8 1M8 18v-4h4" /></Line><span className="absolute right-[-1px] bottom-[-2px] size-3 rounded-full bg-[#ff9a0b]" /></span>
        <NetTray className="ml-3 size-6" />
        <Line className="ml-3 size-6"><path d="M8 7.500h14v10H6v-5" /><path d="M9 10h11v5.500H9z" fill="currentColor" /><path d="M23.500 10.500v4M1.500 4.500h5v4a2.500 2.500 0 0 1-5 0zM2.500 2v2.500M5.500 2v2.500M4 11v6.500h3" /></Line>
        <VolTray className="ml-3 size-6" />
        <div className="ml-[18px] text-center text-[17px] leading-[27px]">ENG<br />IN</div>
        <time className="ml-[21px] text-center text-[17px] leading-[27px]">11:23 AM<br />6/19/2024</time>
        <button aria-label="Notifications" className="ml-[10px] flex h-full w-[60px] items-center justify-center bg-white/5"><Line className="size-[26px]"><path d="M1 1.500h22V19h-7l-4 4-4-4H1z" strokeLinejoin="miter" /></Line></button>
        <span className="mr-[6px] ml-3 h-full w-px bg-[#7d888d]" />
      </div>
    </footer>
  );
}

export default function App() {
  return (
    <div className="flex min-h-screen flex-col bg-[#f5f5f5] font-['Open_Sans','Noto_Sans',sans-serif]">
      <TitleBar />
      <MeetingBar />
      <main className="flex flex-1 pt-[5px] pb-[6px] pl-[6px]">
        <SharedScreen />
        <Participants />
      </main>
      <Taskbar />
    </div>
  );
}
